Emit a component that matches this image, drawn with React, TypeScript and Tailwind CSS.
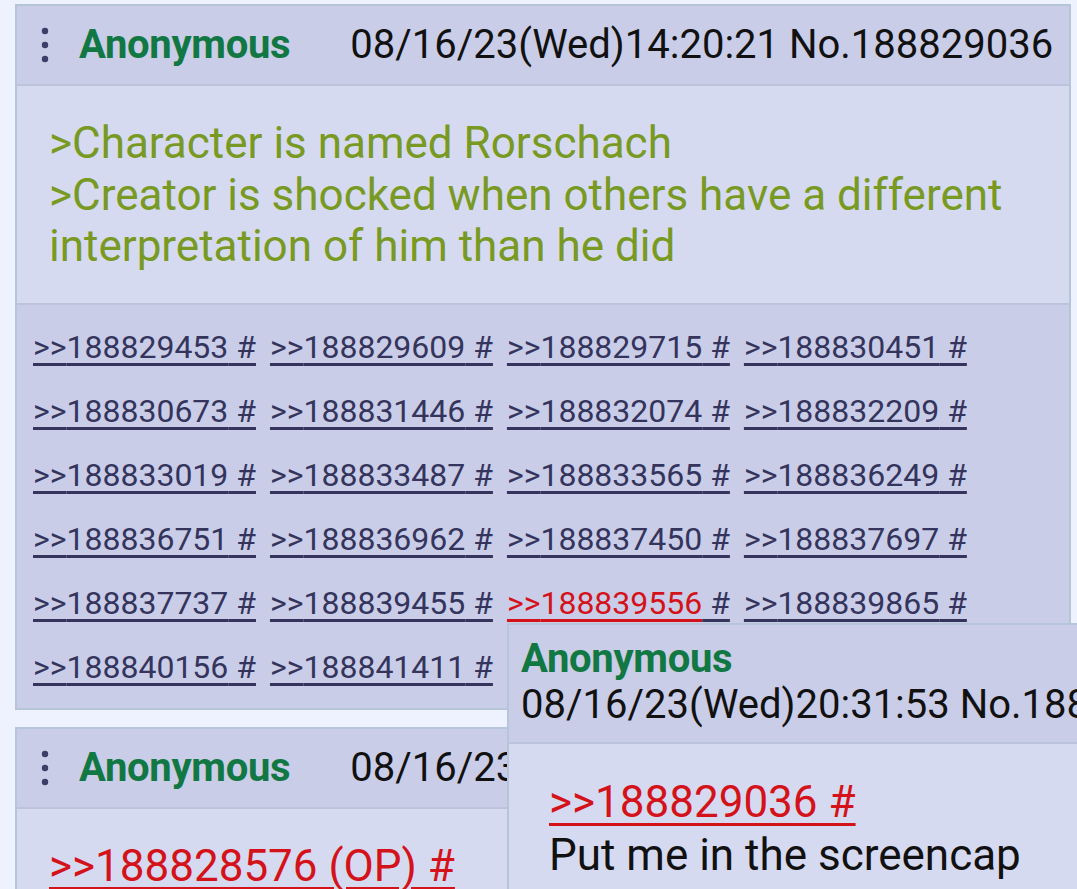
import React from "react";

const replies: string[] = [
  "188829453", "188829609", "188829715", "188830451",
  "188830673", "188831446", "188832074", "188832209",
  "188833019", "188833487", "188833565", "188836249",
  "188836751", "188836962", "188837450", "188837697",
  "188837737", "188839455", "188839556", "188839865",
  "188840156", "188841411",
];

const HOT = "188839556";

function MenuDots() {
  return (
    <svg width="8" height="36" viewBox="0 0 8 36" className="shrink-0">
      <circle cx="4" cy="4" r="3.2" fill="#3b3e68" />
      <circle cx="4" cy="18" r="3.2" fill="#3b3e68" />
      <circle cx="4" cy="32" r="3.2" fill="#3b3e68" />
    </svg>
  );
}

function PostHeader({ date }: { date: string }) {
  return (
    <div className="flex h-[80px] items-center whitespace-nowrap border-b-2 border-[#bcc3dc] bg-[#c9cde8] pl-[24px]">
      <MenuDots />
      <span className="ml-[30px] text-[40px] font-bold leading-none tracking-[-0.3px] text-[#117743]">
        Anonymous
      </span>
      <span className="ml-[60px] text-[40px] leading-none text-[#111]">{date}</span>
    </div>
  );
}

function ReplyLink({ id }: { id: string }) {
  const hot = id === HOT;
  return (
    <span className="whitespace-nowrap">
      <span
        className={
          hot
            ? "text-[#d4121a] underline decoration-[color:#d4121a] decoration-[2.5px] underline-offset-[5px]"
            : "text-[#34345c] underline decoration-[2.5px] underline-offset-[5px]"
        }
      >
        &gt;&gt;{id}
      </span>
      <span className="text-[#34345c] underline decoration-[2.5px] underline-offset-[5px]"> #</span>
    </span>
  );
}

export default function App() {
  return (
    <div
      className="relative h-[889px] w-full overflow-hidden bg-[#eef2ff]"
      style={{ fontFamily: "Roboto, 'Noto Sans', Arial, sans-serif" }}
    >
      <div className="pt-[4px]">
        {/* Opening post */}
        <div className="ml-[15px] mr-[6px] border-2 border-[#b7c5d9]">
          <PostHeader date="08/16/23(Wed)14:20:21 No.188829036" />
          <div className="border-b-2 border-[#bcc3dc] bg-[#d6daf0] pb-[30px] pl-[32px] pt-[32px] text-[44px] leading-[51.5px] text-[#789922]">
            <div>&gt;Character is named Rorschach</div>
            <div>&gt;Creator is shocked when others have a different</div>
            <div>interpretation of him than he did</div>
          </div>
          <div className="flex flex-wrap gap-x-[14px] bg-[#c9cde8] pb-[9px] pl-[16px] pt-[10px] text-[32px] leading-[64px]">
            {replies.map((r) => (
              <ReplyLink key={r} id={r} />
            ))}
          </div>
        </div>

        {/* Reply post */}
        <div className="ml-[15px] mr-[6px] mt-[17px] border-2 border-[#b7c5d9]">
          <PostHeader date="08/16/23(Wed)14:21:02 No.188829101" />
          <div className="bg-[#d6daf0] pl-[32px] pt-[31px] text-[44px] leading-[53px]">
            <div>
              <span className="text-[#d4121a] underline decoration-[2.5px] underline-offset-[6px]">
                &gt;&gt;188828576 (OP) #
              </span>
            </div>
            <div className="text-[#111]">&nbsp;</div>
          </div>
        </div>
      </div>

      {/* Hover preview of the quoted reply */}
      <div className="absolute left-[507px] top-[623px] w-[720px] border-2 border-[#b7c5d9] bg-[#d6daf0] whitespace-nowrap">
        <div className="border-b-2 border-[#bcc3dc] bg-[#c9cde8] pb-[14px] pl-[12px] pt-[11px]">
          <div className="text-[40px] font-bold leading-[46px] tracking-[-0.3px] text-[#117743]">Anonymous</div>
          <div className="text-[40px] leading-[46px] text-[#111]">
            08/16/23(Wed)20:31:53 No.188839556
          </div>
        </div>
        <div className="pb-[40px] pl-[40px] pt-[32px] text-[44px] leading-[53px]">
          <div>
            <span className="text-[#d4121a] underline decoration-[2.5px] underline-offset-[6px]">
              &gt;&gt;188829036 #
            </span>
          </div>
          <div className="text-[#111]">Put me in the screencap</div>
        </div>
      </div>
    </div>
  );
}
